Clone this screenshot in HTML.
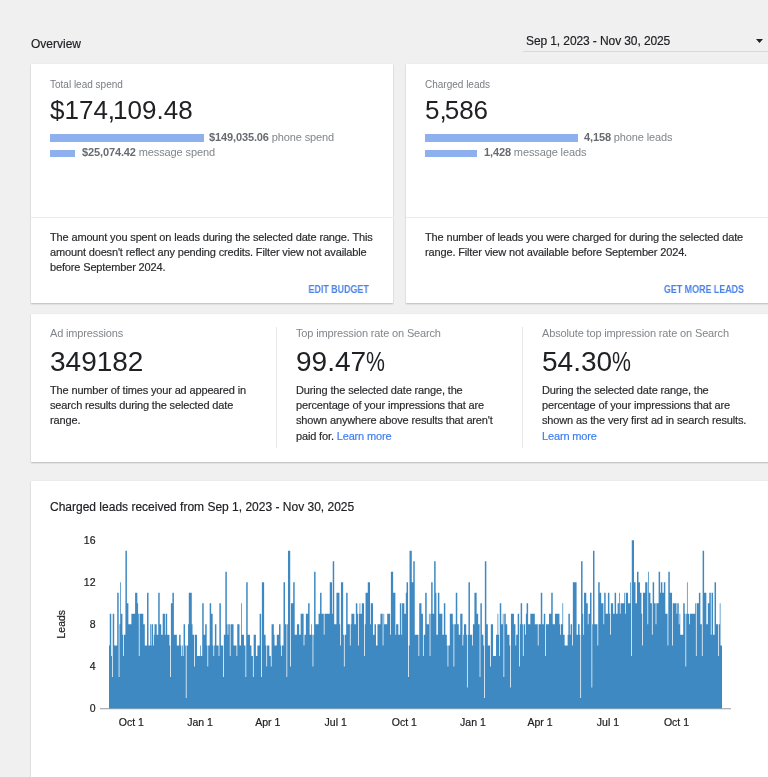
<!DOCTYPE html>
<html><head><meta charset="utf-8">
<style>
html,body{margin:0;padding:0;}
body{width:768px;height:777px;overflow:hidden;background:#f0f0f0;position:relative;font-family:"Liberation Sans",sans-serif;color:#202124;}
.a{position:absolute;white-space:nowrap;line-height:1;will-change:transform;-webkit-text-stroke:0.18px currentColor;}
.big,.btn,.lbl,.lbl2,.bt{-webkit-text-stroke:0 !important;}
.card{position:absolute;background:#fff;box-shadow:0 1px 1.5px rgba(0,0,0,.22),0 0 1px rgba(0,0,0,.08);}
.lbl{font-size:10px;color:#787c82;}
.lbl2{font-size:11px;color:#80868b;letter-spacing:-0.15px;}
.big{font-size:26px;color:#202124;}
.bar{position:absolute;background:#8fb0ef;}
.bt{font-size:11px;color:#80868b;letter-spacing:-0.12px;}
.bt b{color:#676b70;}
.desc{font-size:11px;color:#2a2b2e;line-height:15.2px;letter-spacing:-0.15px;}
.btn{font-size:10px;color:#4a82e6;font-weight:bold;transform:scaleX(0.89);transform-origin:100% 50%;}
.link{color:#3f7ef0;}
.cm{letter-spacing:-2px;}
.pct{display:inline-block;transform:scaleX(0.76);transform-origin:0 50%;}
.vdiv{position:absolute;width:1px;background:#e8e8e8;}
</style></head><body>

<div class="a" style="left:31px;top:37.6px;font-size:12px;color:#202124">Overview</div>
<div class="a" style="left:526px;top:34.6px;font-size:12px;color:#202124;letter-spacing:-0.1px">Sep 1, 2023 - Nov 30, 2025</div>
<div style="position:absolute;left:523px;top:51px;width:245px;height:1px;background:#d9d9d9"></div>
<svg style="position:absolute;left:755px;top:38px" width="9" height="6"><path d="M1 1 L8 1 L4.5 5 Z" fill="#202124"/></svg>

<!-- card 1 -->
<div class="card" style="left:31px;top:64px;width:362.2px;height:239.2px"></div>
<div class="a lbl" style="left:50px;top:79.7px">Total lead spend</div>
<div class="a big" style="left:50px;top:96.9px">$174<span class="cm">,</span>109.48</div>
<div class="bar" style="left:49.5px;top:134px;width:154px;height:7.5px"></div>
<div class="a bt" style="left:209px;top:131.6px"><b>$149,035.06</b> phone spend</div>
<div class="bar" style="left:49.5px;top:149.6px;width:25.7px;height:7.5px"></div>
<div class="a bt" style="left:82px;top:147.1px"><b>$25,074.42</b> message spend</div>
<div style="position:absolute;left:31px;top:217px;width:362.5px;height:1px;background:#ececec"></div>
<div class="a desc" style="left:50px;top:229.8px">The amount you spent on leads during the selected date range. This<br>amount doesn't reflect any pending credits. Filter view not available<br>before September 2024.</div>
<div class="a btn" style="right:399.25px;top:284.6px">EDIT BUDGET</div>

<!-- card 2 -->
<div class="card" style="left:406px;top:64px;width:362.5px;height:239.2px"></div>
<div class="a lbl" style="left:425px;top:79.7px">Charged leads</div>
<div class="a big" style="left:425px;top:96.9px">5<span class="cm">,</span>586</div>
<div class="bar" style="left:424.8px;top:134px;width:153px;height:7.5px"></div>
<div class="a bt" style="left:584px;top:131.6px"><b>4,158</b> phone leads</div>
<div class="bar" style="left:424.8px;top:149.6px;width:52.3px;height:7.5px"></div>
<div class="a bt" style="left:484px;top:147.1px"><b>1,428</b> message leads</div>
<div style="position:absolute;left:406px;top:217px;width:362.5px;height:1px;background:#ececec"></div>
<div class="a desc" style="left:425px;top:229.8px">The number of leads you were charged for during the selected date<br>range. Filter view not available before September 2024.</div>
<div class="a btn" style="right:24.2px;top:284.6px">GET MORE LEADS</div>

<!-- card 3 -->
<div class="card" style="left:31px;top:314px;width:737.5px;height:147.5px"></div>
<div class="vdiv" style="left:276px;top:326.5px;height:121px"></div>
<div class="vdiv" style="left:522px;top:326.5px;height:121px"></div>
<div class="a lbl2" style="left:50px;top:327.9px">Ad impressions</div>
<div class="a big" style="left:50px;top:347.8px;font-size:28px">349182</div>
<div class="a desc" style="left:50px;top:383.4px">The number of times your ad appeared in<br>search results during the selected date<br>range.</div>

<div class="a lbl2" style="left:296px;top:327.9px">Top impression rate on Search</div>
<div class="a big" style="left:296px;top:347.8px;font-size:28px">99.47<span class="pct">%</span></div>
<div class="a desc" style="left:296px;top:383.4px">During the selected date range, the<br>percentage of your impressions that are<br>shown anywhere above results that aren't<br>paid for. <span class="link">Learn more</span></div>

<div class="a lbl2" style="left:542px;top:327.9px">Absolute top impression rate on Search</div>
<div class="a big" style="left:542px;top:347.8px;font-size:28px">54.30<span class="pct">%</span></div>
<div class="a desc" style="left:542px;top:383.4px">During the selected date range, the<br>percentage of your impressions that are<br>shown as the very first ad in search results.<br><span class="link">Learn more</span></div>

<!-- card 4 chart -->
<div class="card" style="left:31px;top:481px;width:737.5px;height:320px"></div>
<div class="a" style="left:50px;top:500.6px;font-size:12px;color:#202124">Charged leads received from Sep 1, 2023 - Nov 30, 2025</div>
<svg id="chart" style="position:absolute;left:0;top:0" width="768" height="777">
<rect x="100" y="708" width="631" height="1.3" fill="#b0b0b0"/>
<path d="M109.00,708.5L109.00,645.38L109.75,645.38L109.75,613.82L110.49,613.82L110.49,613.82L111.24,613.82L111.24,655.90L111.98,655.90L111.98,676.94L112.73,676.94L112.73,613.82L113.47,613.82L113.47,613.82L114.22,613.82L114.22,645.38L114.97,645.38L114.97,645.38L115.71,645.38L115.71,645.38L116.46,645.38L116.46,645.38L117.20,645.38L117.20,592.78L117.95,592.78L117.95,592.78L118.69,592.78L118.69,676.94L119.44,676.94L119.44,624.34L120.19,624.34L120.19,582.26L120.93,582.26L120.93,613.82L121.68,613.82L121.68,613.82L122.42,613.82L122.42,634.86L123.17,634.86L123.17,655.90L123.91,655.90L123.91,634.86L124.66,634.86L124.66,634.86L125.41,634.86L125.41,550.70L126.15,550.70L126.15,550.70L126.90,550.70L126.90,603.30L127.64,603.30L127.64,603.30L128.39,603.30L128.39,624.34L129.14,624.34L129.14,624.34L129.88,624.34L129.88,624.34L130.63,624.34L130.63,624.34L131.37,624.34L131.37,613.82L132.12,613.82L132.12,613.82L132.86,613.82L132.86,613.82L133.61,613.82L133.61,613.82L134.36,613.82L134.36,613.82L135.10,613.82L135.10,592.78L135.85,592.78L135.85,592.78L136.59,592.78L136.59,592.78L137.34,592.78L137.34,603.30L138.08,603.30L138.08,613.82L138.83,613.82L138.83,655.90L139.58,655.90L139.58,613.82L140.32,613.82L140.32,613.82L141.07,613.82L141.07,613.82L141.81,613.82L141.81,613.82L142.56,613.82L142.56,613.82L143.30,613.82L143.30,624.34L144.05,624.34L144.05,624.34L144.80,624.34L144.80,645.38L145.54,645.38L145.54,645.38L146.29,645.38L146.29,645.38L147.03,645.38L147.03,592.78L147.78,592.78L147.78,592.78L148.52,592.78L148.52,645.38L149.27,645.38L149.27,645.38L150.02,645.38L150.02,624.34L150.76,624.34L150.76,645.38L151.51,645.38L151.51,624.34L152.25,624.34L152.25,624.34L153.00,624.34L153.00,645.38L153.74,645.38L153.74,634.86L154.49,634.86L154.49,624.34L155.24,624.34L155.24,624.34L155.98,624.34L155.98,624.34L156.73,624.34L156.73,634.86L157.47,634.86L157.47,634.86L158.22,634.86L158.22,592.78L158.96,592.78L158.96,592.78L159.71,592.78L159.71,624.34L160.46,624.34L160.46,624.34L161.20,624.34L161.20,634.86L161.95,634.86L161.95,634.86L162.69,634.86L162.69,613.82L163.44,613.82L163.44,613.82L164.18,613.82L164.18,613.82L164.93,613.82L164.93,634.86L165.68,634.86L165.68,613.82L166.42,613.82L166.42,613.82L167.17,613.82L167.17,634.86L167.91,634.86L167.91,634.86L168.66,634.86L168.66,634.86L169.41,634.86L169.41,645.38L170.15,645.38L170.15,676.94L170.90,676.94L170.90,603.30L171.64,603.30L171.64,603.30L172.39,603.30L172.39,592.78L173.13,592.78L173.13,592.78L173.88,592.78L173.88,634.86L174.63,634.86L174.63,634.86L175.37,634.86L175.37,634.86L176.12,634.86L176.12,634.86L176.86,634.86L176.86,645.38L177.61,645.38L177.61,645.38L178.35,645.38L178.35,645.38L179.10,645.38L179.10,634.86L179.85,634.86L179.85,634.86L180.59,634.86L180.59,645.38L181.34,645.38L181.34,655.90L182.08,655.90L182.08,645.38L182.83,645.38L182.83,655.90L183.57,655.90L183.57,624.34L184.32,624.34L184.32,624.34L185.07,624.34L185.07,645.38L185.81,645.38L185.81,697.98L186.56,697.98L186.56,645.38L187.30,645.38L187.30,645.38L188.05,645.38L188.05,624.34L188.79,624.34L188.79,592.78L189.54,592.78L189.54,592.78L190.29,592.78L190.29,592.78L191.03,592.78L191.03,592.78L191.78,592.78L191.78,624.34L192.52,624.34L192.52,634.86L193.27,634.86L193.27,634.86L194.01,634.86L194.01,666.42L194.76,666.42L194.76,634.86L195.51,634.86L195.51,634.86L196.25,634.86L196.25,634.86L197.00,634.86L197.00,655.90L197.74,655.90L197.74,655.90L198.49,655.90L198.49,655.90L199.23,655.90L199.23,655.90L199.98,655.90L199.98,645.38L200.73,645.38L200.73,655.90L201.47,655.90L201.47,655.90L202.22,655.90L202.22,603.30L202.96,603.30L202.96,603.30L203.71,603.30L203.71,634.86L204.45,634.86L204.45,634.86L205.20,634.86L205.20,624.34L205.95,624.34L205.95,624.34L206.69,624.34L206.69,645.38L207.44,645.38L207.44,666.42L208.18,666.42L208.18,645.38L208.93,645.38L208.93,645.38L209.68,645.38L209.68,603.30L210.42,603.30L210.42,603.30L211.17,603.30L211.17,613.82L211.91,613.82L211.91,613.82L212.66,613.82L212.66,645.38L213.40,645.38L213.40,655.90L214.15,655.90L214.15,645.38L214.90,645.38L214.90,624.34L215.64,624.34L215.64,624.34L216.39,624.34L216.39,645.38L217.13,645.38L217.13,645.38L217.88,645.38L217.88,645.38L218.62,645.38L218.62,655.90L219.37,655.90L219.37,603.30L220.12,603.30L220.12,603.30L220.86,603.30L220.86,645.38L221.61,645.38L221.61,645.38L222.35,645.38L222.35,645.38L223.10,645.38L223.10,676.94L223.84,676.94L223.84,634.86L224.59,634.86L224.59,634.86L225.34,634.86L225.34,571.74L226.08,571.74L226.08,571.74L226.83,571.74L226.83,624.34L227.57,624.34L227.57,634.86L228.32,634.86L228.32,624.34L229.06,624.34L229.06,624.34L229.81,624.34L229.81,655.90L230.56,655.90L230.56,624.34L231.30,624.34L231.30,624.34L232.05,624.34L232.05,624.34L232.79,624.34L232.79,624.34L233.54,624.34L233.54,645.38L234.28,645.38L234.28,645.38L235.03,645.38L235.03,645.38L235.78,645.38L235.78,645.38L236.52,645.38L236.52,655.90L237.27,655.90L237.27,624.34L238.01,624.34L238.01,624.34L238.76,624.34L238.76,624.34L239.50,624.34L239.50,645.38L240.25,645.38L240.25,645.38L241.00,645.38L241.00,603.30L241.74,603.30L241.74,634.86L242.49,634.86L242.49,634.86L243.23,634.86L243.23,634.86L243.98,634.86L243.98,645.38L244.73,645.38L244.73,645.38L245.47,645.38L245.47,676.94L246.22,676.94L246.22,582.26L246.96,582.26L246.96,582.26L247.71,582.26L247.71,634.86L248.45,634.86L248.45,634.86L249.20,634.86L249.20,634.86L249.95,634.86L249.95,645.38L250.69,645.38L250.69,645.38L251.44,645.38L251.44,655.90L252.18,655.90L252.18,655.90L252.93,655.90L252.93,676.94L253.67,676.94L253.67,634.86L254.42,634.86L254.42,634.86L255.17,634.86L255.17,634.86L255.91,634.86L255.91,655.90L256.66,655.90L256.66,655.90L257.40,655.90L257.40,645.38L258.15,645.38L258.15,645.38L258.89,645.38L258.89,645.38L259.64,645.38L259.64,613.82L260.39,613.82L260.39,613.82L261.13,613.82L261.13,676.94L261.88,676.94L261.88,582.26L262.62,582.26L262.62,582.26L263.37,582.26L263.37,582.26L264.11,582.26L264.11,634.86L264.86,634.86L264.86,634.86L265.61,634.86L265.61,645.38L266.35,645.38L266.35,666.42L267.10,666.42L267.10,645.38L267.84,645.38L267.84,645.38L268.59,645.38L268.59,645.38L269.33,645.38L269.33,655.90L270.08,655.90L270.08,655.90L270.83,655.90L270.83,666.42L271.57,666.42L271.57,624.34L272.32,624.34L272.32,624.34L273.06,624.34L273.06,624.34L273.81,624.34L273.81,634.86L274.55,634.86L274.55,645.38L275.30,645.38L275.30,645.38L276.05,645.38L276.05,645.38L276.79,645.38L276.79,634.86L277.54,634.86L277.54,634.86L278.28,634.86L278.28,634.86L279.03,634.86L279.03,624.34L279.77,624.34L279.77,624.34L280.52,624.34L280.52,645.38L281.27,645.38L281.27,655.90L282.01,655.90L282.01,645.38L282.76,645.38L282.76,645.38L283.50,645.38L283.50,582.26L284.25,582.26L284.25,582.26L285.00,582.26L285.00,624.34L285.74,624.34L285.74,624.34L286.49,624.34L286.49,676.94L287.23,676.94L287.23,624.34L287.98,624.34L287.98,550.70L288.72,550.70L288.72,550.70L289.47,550.70L289.47,550.70L290.22,550.70L290.22,666.42L290.96,666.42L290.96,603.30L291.71,603.30L291.71,603.30L292.45,603.30L292.45,603.30L293.20,603.30L293.20,582.26L293.94,582.26L293.94,582.26L294.69,582.26L294.69,634.86L295.44,634.86L295.44,634.86L296.18,634.86L296.18,634.86L296.93,634.86L296.93,624.34L297.67,624.34L297.67,624.34L298.42,624.34L298.42,624.34L299.16,624.34L299.16,634.86L299.91,634.86L299.91,634.86L300.66,634.86L300.66,613.82L301.40,613.82L301.40,613.82L302.15,613.82L302.15,613.82L302.89,613.82L302.89,613.82L303.64,613.82L303.64,645.38L304.38,645.38L304.38,634.86L305.13,634.86L305.13,634.86L305.88,634.86L305.88,613.82L306.62,613.82L306.62,613.82L307.37,613.82L307.37,613.82L308.11,613.82L308.11,603.30L308.86,603.30L308.86,603.30L309.60,603.30L309.60,634.86L310.35,634.86L310.35,634.86L311.10,634.86L311.10,624.34L311.84,624.34L311.84,634.86L312.59,634.86L312.59,666.42L313.33,666.42L313.33,634.86L314.08,634.86L314.08,571.74L314.82,571.74L314.82,571.74L315.57,571.74L315.57,624.34L316.32,624.34L316.32,624.34L317.06,624.34L317.06,624.34L317.81,624.34L317.81,624.34L318.55,624.34L318.55,613.82L319.30,613.82L319.30,613.82L320.05,613.82L320.05,592.78L320.79,592.78L320.79,592.78L321.54,592.78L321.54,613.82L322.28,613.82L322.28,613.82L323.03,613.82L323.03,613.82L323.77,613.82L323.77,634.86L324.52,634.86L324.52,613.82L325.27,613.82L325.27,613.82L326.01,613.82L326.01,613.82L326.76,613.82L326.76,613.82L327.50,613.82L327.50,613.82L328.25,613.82L328.25,613.82L328.99,613.82L328.99,613.82L329.74,613.82L329.74,582.26L330.49,582.26L330.49,582.26L331.23,582.26L331.23,582.26L331.98,582.26L331.98,613.82L332.72,613.82L332.72,561.22L333.47,561.22L333.47,561.22L334.21,561.22L334.21,624.34L334.96,624.34L334.96,624.34L335.71,624.34L335.71,624.34L336.45,624.34L336.45,592.78L337.20,592.78L337.20,592.78L337.94,592.78L337.94,592.78L338.69,592.78L338.69,592.78L339.43,592.78L339.43,624.34L340.18,624.34L340.18,645.38L340.93,645.38L340.93,582.26L341.67,582.26L341.67,582.26L342.42,582.26L342.42,582.26L343.16,582.26L343.16,634.86L343.91,634.86L343.91,666.42L344.65,666.42L344.65,634.86L345.40,634.86L345.40,634.86L346.15,634.86L346.15,592.78L346.89,592.78L346.89,592.78L347.64,592.78L347.64,624.34L348.38,624.34L348.38,624.34L349.13,624.34L349.13,624.34L349.87,624.34L349.87,645.38L350.62,645.38L350.62,624.34L351.37,624.34L351.37,613.82L352.11,613.82L352.11,613.82L352.86,613.82L352.86,613.82L353.60,613.82L353.60,613.82L354.35,613.82L354.35,624.34L355.09,624.34L355.09,624.34L355.84,624.34L355.84,603.30L356.59,603.30L356.59,603.30L357.33,603.30L357.33,613.82L358.08,613.82L358.08,645.38L358.82,645.38L358.82,613.82L359.57,613.82L359.57,603.30L360.32,603.30L360.32,613.82L361.06,613.82L361.06,613.82L361.81,613.82L361.81,603.30L362.55,603.30L362.55,603.30L363.30,603.30L363.30,603.30L364.04,603.30L364.04,655.90L364.79,655.90L364.79,624.34L365.54,624.34L365.54,592.78L366.28,592.78L366.28,592.78L367.03,592.78L367.03,592.78L367.77,592.78L367.77,582.26L368.52,582.26L368.52,582.26L369.26,582.26L369.26,582.26L370.01,582.26L370.01,624.34L370.76,624.34L370.76,603.30L371.50,603.30L371.50,603.30L372.25,603.30L372.25,603.30L372.99,603.30L372.99,634.86L373.74,634.86L373.74,634.86L374.48,634.86L374.48,624.34L375.23,624.34L375.23,624.34L375.98,624.34L375.98,645.38L376.72,645.38L376.72,645.38L377.47,645.38L377.47,624.34L378.21,624.34L378.21,624.34L378.96,624.34L378.96,624.34L379.70,624.34L379.70,624.34L380.45,624.34L380.45,613.82L381.20,613.82L381.20,613.82L381.94,613.82L381.94,613.82L382.69,613.82L382.69,645.38L383.43,645.38L383.43,613.82L384.18,613.82L384.18,624.34L384.92,624.34L384.92,624.34L385.67,624.34L385.67,624.34L386.42,624.34L386.42,624.34L387.16,624.34L387.16,613.82L387.91,613.82L387.91,613.82L388.65,613.82L388.65,613.82L389.40,613.82L389.40,613.82L390.14,613.82L390.14,634.86L390.89,634.86L390.89,571.74L391.64,571.74L391.64,571.74L392.38,571.74L392.38,571.74L393.13,571.74L393.13,592.78L393.87,592.78L393.87,592.78L394.62,592.78L394.62,592.78L395.36,592.78L395.36,634.86L396.11,634.86L396.11,624.34L396.86,624.34L396.86,624.34L397.60,624.34L397.60,624.34L398.35,624.34L398.35,634.86L399.09,634.86L399.09,634.86L399.84,634.86L399.84,603.30L400.59,603.30L400.59,603.30L401.33,603.30L401.33,634.86L402.08,634.86L402.08,603.30L402.82,603.30L402.82,603.30L403.57,603.30L403.57,603.30L404.31,603.30L404.31,613.82L405.06,613.82L405.06,613.82L405.81,613.82L405.81,592.78L406.55,592.78L406.55,582.26L407.30,582.26L407.30,582.26L408.04,582.26L408.04,676.94L408.79,676.94L408.79,645.38L409.53,645.38L409.53,550.70L410.28,550.70L410.28,550.70L411.03,550.70L411.03,550.70L411.77,550.70L411.77,582.26L412.52,582.26L412.52,582.26L413.26,582.26L413.26,561.22L414.01,561.22L414.01,561.22L414.75,561.22L414.75,634.86L415.50,634.86L415.50,634.86L416.25,634.86L416.25,634.86L416.99,634.86L416.99,634.86L417.74,634.86L417.74,634.86L418.48,634.86L418.48,655.90L419.23,655.90L419.23,603.30L419.97,603.30L419.97,603.30L420.72,603.30L420.72,603.30L421.47,603.30L421.47,613.82L422.21,613.82L422.21,613.82L422.96,613.82L422.96,655.90L423.70,655.90L423.70,634.86L424.45,634.86L424.45,634.86L425.19,634.86L425.19,592.78L425.94,592.78L425.94,592.78L426.69,592.78L426.69,624.34L427.43,624.34L427.43,624.34L428.18,624.34L428.18,624.34L428.92,624.34L428.92,613.82L429.67,613.82L429.67,655.90L430.41,655.90L430.41,613.82L431.16,613.82L431.16,582.26L431.91,582.26L431.91,582.26L432.65,582.26L432.65,613.82L433.40,613.82L433.40,613.82L434.14,613.82L434.14,561.22L434.89,561.22L434.89,561.22L435.64,561.22L435.64,592.78L436.38,592.78L436.38,634.86L437.13,634.86L437.13,634.86L437.87,634.86L437.87,592.78L438.62,592.78L438.62,592.78L439.36,592.78L439.36,613.82L440.11,613.82L440.11,613.82L440.86,613.82L440.86,613.82L441.60,613.82L441.60,613.82L442.35,613.82L442.35,634.86L443.09,634.86L443.09,634.86L443.84,634.86L443.84,603.30L444.58,603.30L444.58,603.30L445.33,603.30L445.33,634.86L446.08,634.86L446.08,634.86L446.82,634.86L446.82,645.38L447.57,645.38L447.57,666.42L448.31,666.42L448.31,645.38L449.06,645.38L449.06,645.38L449.80,645.38L449.80,613.82L450.55,613.82L450.55,613.82L451.30,613.82L451.30,613.82L452.04,613.82L452.04,613.82L452.79,613.82L452.79,624.34L453.53,624.34L453.53,666.42L454.28,666.42L454.28,624.34L455.02,624.34L455.02,624.34L455.77,624.34L455.77,592.78L456.52,592.78L456.52,592.78L457.26,592.78L457.26,624.34L458.01,624.34L458.01,624.34L458.75,624.34L458.75,634.86L459.50,634.86L459.50,634.86L460.24,634.86L460.24,613.82L460.99,613.82L460.99,613.82L461.74,613.82L461.74,613.82L462.48,613.82L462.48,645.38L463.23,645.38L463.23,634.86L463.97,634.86L463.97,624.34L464.72,624.34L464.72,624.34L465.46,624.34L465.46,624.34L466.21,624.34L466.21,634.86L466.96,634.86L466.96,687.46L467.70,687.46L467.70,634.86L468.45,634.86L468.45,582.26L469.19,582.26L469.19,582.26L469.94,582.26L469.94,634.86L470.68,634.86L470.68,634.86L471.43,634.86L471.43,634.86L472.18,634.86L472.18,645.38L472.92,645.38L472.92,624.34L473.67,624.34L473.67,624.34L474.41,624.34L474.41,592.78L475.16,592.78L475.16,592.78L475.91,592.78L475.91,592.78L476.65,592.78L476.65,613.82L477.40,613.82L477.40,613.82L478.14,613.82L478.14,624.34L478.89,624.34L478.89,624.34L479.63,624.34L479.63,676.94L480.38,676.94L480.38,603.30L481.13,603.30L481.13,603.30L481.87,603.30L481.87,634.86L482.62,634.86L482.62,634.86L483.36,634.86L483.36,645.38L484.11,645.38L484.11,697.98L484.85,697.98L484.85,561.22L485.60,561.22L485.60,561.22L486.35,561.22L486.35,624.34L487.09,624.34L487.09,624.34L487.84,624.34L487.84,645.38L488.58,645.38L488.58,645.38L489.33,645.38L489.33,645.38L490.07,645.38L490.07,666.42L490.82,666.42L490.82,624.34L491.57,624.34L491.57,624.34L492.31,624.34L492.31,624.34L493.06,624.34L493.06,655.90L493.80,655.90L493.80,655.90L494.55,655.90L494.55,655.90L495.29,655.90L495.29,655.90L496.04,655.90L496.04,634.86L496.79,634.86L496.79,634.86L497.53,634.86L497.53,613.82L498.28,613.82L498.28,634.86L499.02,634.86L499.02,655.90L499.77,655.90L499.77,603.30L500.51,603.30L500.51,603.30L501.26,603.30L501.26,624.34L502.01,624.34L502.01,624.34L502.75,624.34L502.75,613.82L503.50,613.82L503.50,676.94L504.24,676.94L504.24,613.82L504.99,613.82L504.99,613.82L505.73,613.82L505.73,624.34L506.48,624.34L506.48,624.34L507.23,624.34L507.23,634.86L507.97,634.86L507.97,634.86L508.72,634.86L508.72,634.86L509.46,634.86L509.46,645.38L510.21,645.38L510.21,687.46L510.95,687.46L510.95,613.82L511.70,613.82L511.70,613.82L512.45,613.82L512.45,613.82L513.19,613.82L513.19,613.82L513.94,613.82L513.94,624.34L514.68,624.34L514.68,624.34L515.43,624.34L515.43,645.38L516.18,645.38L516.18,634.86L516.92,634.86L516.92,634.86L517.67,634.86L517.67,613.82L518.41,613.82L518.41,613.82L519.16,613.82L519.16,666.42L519.90,666.42L519.90,624.34L520.65,624.34L520.65,603.30L521.40,603.30L521.40,603.30L522.14,603.30L522.14,624.34L522.89,624.34L522.89,655.90L523.63,655.90L523.63,624.34L524.38,624.34L524.38,624.34L525.12,624.34L525.12,634.86L525.87,634.86L525.87,613.82L526.62,613.82L526.62,603.30L527.36,603.30L527.36,603.30L528.11,603.30L528.11,624.34L528.85,624.34L528.85,624.34L529.60,624.34L529.60,624.34L530.34,624.34L530.34,613.82L531.09,613.82L531.09,613.82L531.84,613.82L531.84,613.82L532.58,613.82L532.58,613.82L533.33,613.82L533.33,613.82L534.07,613.82L534.07,613.82L534.82,613.82L534.82,624.34L535.56,624.34L535.56,624.34L536.31,624.34L536.31,624.34L537.06,624.34L537.06,624.34L537.80,624.34L537.80,645.38L538.55,645.38L538.55,624.34L539.29,624.34L539.29,624.34L540.04,624.34L540.04,624.34L540.78,624.34L540.78,592.78L541.53,592.78L541.53,592.78L542.28,592.78L542.28,624.34L543.02,624.34L543.02,624.34L543.77,624.34L543.77,613.82L544.51,613.82L544.51,613.82L545.26,613.82L545.26,655.90L546.00,655.90L546.00,624.34L546.75,624.34L546.75,624.34L547.50,624.34L547.50,624.34L548.24,624.34L548.24,624.34L548.99,624.34L548.99,613.82L549.73,613.82L549.73,613.82L550.48,613.82L550.48,613.82L551.23,613.82L551.23,592.78L551.97,592.78L551.97,592.78L552.72,592.78L552.72,624.34L553.46,624.34L553.46,624.34L554.21,624.34L554.21,624.34L554.95,624.34L554.95,613.82L555.70,613.82L555.70,613.82L556.45,613.82L556.45,613.82L557.19,613.82L557.19,613.82L557.94,613.82L557.94,613.82L558.68,613.82L558.68,613.82L559.43,613.82L559.43,624.34L560.17,624.34L560.17,634.86L560.92,634.86L560.92,624.34L561.67,624.34L561.67,624.34L562.41,624.34L562.41,603.30L563.16,603.30L563.16,634.86L563.90,634.86L563.90,634.86L564.65,634.86L564.65,645.38L565.39,645.38L565.39,645.38L566.14,645.38L566.14,645.38L566.89,645.38L566.89,645.38L567.63,645.38L567.63,634.86L568.38,634.86L568.38,613.82L569.12,613.82L569.12,613.82L569.87,613.82L569.87,634.86L570.61,634.86L570.61,624.34L571.36,624.34L571.36,624.34L572.11,624.34L572.11,645.38L572.85,645.38L572.85,582.26L573.60,582.26L573.60,582.26L574.34,582.26L574.34,582.26L575.09,582.26L575.09,582.26L575.83,582.26L575.83,582.26L576.58,582.26L576.58,634.86L577.33,634.86L577.33,634.86L578.07,634.86L578.07,624.34L578.82,624.34L578.82,624.34L579.56,624.34L579.56,634.86L580.31,634.86L580.31,697.98L581.05,697.98L581.05,561.22L581.80,561.22L581.80,561.22L582.55,561.22L582.55,613.82L583.29,613.82L583.29,634.86L584.04,634.86L584.04,592.78L584.78,592.78L584.78,592.78L585.53,592.78L585.53,592.78L586.27,592.78L586.27,603.30L587.02,603.30L587.02,603.30L587.77,603.30L587.77,624.34L588.51,624.34L588.51,613.82L589.26,613.82L589.26,613.82L590.00,613.82L590.00,592.78L590.75,592.78L590.75,592.78L591.50,592.78L591.50,687.46L592.24,687.46L592.24,624.34L592.99,624.34L592.99,550.70L593.73,550.70L593.73,550.70L594.48,550.70L594.48,624.34L595.22,624.34L595.22,624.34L595.97,624.34L595.97,624.34L596.72,624.34L596.72,624.34L597.46,624.34L597.46,645.38L598.21,645.38L598.21,582.26L598.95,582.26L598.95,582.26L599.70,582.26L599.70,592.78L600.44,592.78L600.44,592.78L601.19,592.78L601.19,603.30L601.94,603.30L601.94,603.30L602.68,603.30L602.68,603.30L603.43,603.30L603.43,624.34L604.17,624.34L604.17,592.78L604.92,592.78L604.92,592.78L605.66,592.78L605.66,613.82L606.41,613.82L606.41,613.82L607.16,613.82L607.16,613.82L607.90,613.82L607.90,592.78L608.65,592.78L608.65,592.78L609.39,592.78L609.39,613.82L610.14,613.82L610.14,634.86L610.88,634.86L610.88,603.30L611.63,603.30L611.63,603.30L612.38,603.30L612.38,603.30L613.12,603.30L613.12,613.82L613.87,613.82L613.87,613.82L614.61,613.82L614.61,592.78L615.36,592.78L615.36,592.78L616.10,592.78L616.10,613.82L616.85,613.82L616.85,613.82L617.60,613.82L617.60,603.30L618.34,603.30L618.34,603.30L619.09,603.30L619.09,592.78L619.83,592.78L619.83,613.82L620.58,613.82L620.58,603.30L621.32,603.30L621.32,603.30L622.07,603.30L622.07,603.30L622.82,603.30L622.82,603.30L623.56,603.30L623.56,603.30L624.31,603.30L624.31,592.78L625.05,592.78L625.05,613.82L625.80,613.82L625.80,592.78L626.55,592.78L626.55,592.78L627.29,592.78L627.29,592.78L628.04,592.78L628.04,603.30L628.78,603.30L628.78,603.30L629.53,603.30L629.53,603.30L630.27,603.30L630.27,582.26L631.02,582.26L631.02,655.90L631.77,655.90L631.77,540.18L632.51,540.18L632.51,540.18L633.26,540.18L633.26,540.18L634.00,540.18L634.00,582.26L634.75,582.26L634.75,582.26L635.49,582.26L635.49,603.30L636.24,603.30L636.24,603.30L636.99,603.30L636.99,571.74L637.73,571.74L637.73,571.74L638.48,571.74L638.48,582.26L639.22,582.26L639.22,582.26L639.97,582.26L639.97,592.78L640.71,592.78L640.71,592.78L641.46,592.78L641.46,613.82L642.21,613.82L642.21,645.38L642.95,645.38L642.95,592.78L643.70,592.78L643.70,592.78L644.44,592.78L644.44,592.78L645.19,592.78L645.19,582.26L645.93,582.26L645.93,582.26L646.68,582.26L646.68,582.26L647.43,582.26L647.43,624.34L648.17,624.34L648.17,571.74L648.92,571.74L648.92,592.78L649.66,592.78L649.66,592.78L650.41,592.78L650.41,603.30L651.15,603.30L651.15,603.30L651.90,603.30L651.90,634.86L652.65,634.86L652.65,582.26L653.39,582.26L653.39,582.26L654.14,582.26L654.14,603.30L654.88,603.30L654.88,603.30L655.63,603.30L655.63,624.34L656.37,624.34L656.37,603.30L657.12,603.30L657.12,603.30L657.87,603.30L657.87,603.30L658.61,603.30L658.61,571.74L659.36,571.74L659.36,571.74L660.10,571.74L660.10,592.78L660.85,592.78L660.85,582.26L661.59,582.26L661.59,582.26L662.34,582.26L662.34,592.78L663.09,592.78L663.09,592.78L663.83,592.78L663.83,582.26L664.58,582.26L664.58,582.26L665.32,582.26L665.32,613.82L666.07,613.82L666.07,613.82L666.82,613.82L666.82,613.82L667.56,613.82L667.56,645.38L668.31,645.38L668.31,571.74L669.05,571.74L669.05,571.74L669.80,571.74L669.80,592.78L670.54,592.78L670.54,592.78L671.29,592.78L671.29,592.78L672.04,592.78L672.04,645.38L672.78,645.38L672.78,603.30L673.53,603.30L673.53,603.30L674.27,603.30L674.27,603.30L675.02,603.30L675.02,603.30L675.76,603.30L675.76,603.30L676.51,603.30L676.51,613.82L677.26,613.82L677.26,603.30L678.00,603.30L678.00,603.30L678.75,603.30L678.75,624.34L679.49,624.34L679.49,613.82L680.24,613.82L680.24,634.86L680.98,634.86L680.98,634.86L681.73,634.86L681.73,634.86L682.48,634.86L682.48,634.86L683.22,634.86L683.22,603.30L683.97,603.30L683.97,603.30L684.71,603.30L684.71,613.82L685.46,613.82L685.46,666.42L686.20,666.42L686.20,613.82L686.95,613.82L686.95,582.26L687.70,582.26L687.70,613.82L688.44,613.82L688.44,613.82L689.19,613.82L689.19,624.34L689.93,624.34L689.93,613.82L690.68,613.82L690.68,613.82L691.42,613.82L691.42,613.82L692.17,613.82L692.17,613.82L692.92,613.82L692.92,613.82L693.66,613.82L693.66,613.82L694.41,613.82L694.41,613.82L695.15,613.82L695.15,603.30L695.90,603.30L695.90,655.90L696.64,655.90L696.64,603.30L697.39,603.30L697.39,603.30L698.14,603.30L698.14,603.30L698.88,603.30L698.88,592.78L699.63,592.78L699.63,592.78L700.37,592.78L700.37,624.34L701.12,624.34L701.12,624.34L701.86,624.34L701.86,655.90L702.61,655.90L702.61,550.70L703.36,550.70L703.36,550.70L704.10,550.70L704.10,592.78L704.85,592.78L704.85,592.78L705.59,592.78L705.59,592.78L706.34,592.78L706.34,624.34L707.09,624.34L707.09,624.34L707.83,624.34L707.83,603.30L708.58,603.30L708.58,603.30L709.32,603.30L709.32,592.78L710.07,592.78L710.07,592.78L710.81,592.78L710.81,634.86L711.56,634.86L711.56,592.78L712.31,592.78L712.31,592.78L713.05,592.78L713.05,634.86L713.80,634.86L713.80,634.86L714.54,634.86L714.54,582.26L715.29,582.26L715.29,582.26L716.03,582.26L716.03,624.34L716.78,624.34L716.78,624.34L717.53,624.34L717.53,624.34L718.27,624.34L718.27,655.90L719.02,655.90L719.02,624.34L719.76,624.34L719.76,603.30L720.51,603.30L720.51,645.38L721.25,645.38L721.25,645.38L722.00,645.38L722.00,708.5Z" fill="#3e89c2"/>
<text x="95.5" y="712.1" text-anchor="end" font-size="10.5" fill="#202124" stroke="#202124" stroke-width="0.2">0</text>
<text x="95.5" y="670.0" text-anchor="end" font-size="10.5" fill="#202124" stroke="#202124" stroke-width="0.2">4</text>
<text x="95.5" y="627.9" text-anchor="end" font-size="10.5" fill="#202124" stroke="#202124" stroke-width="0.2">8</text>
<text x="95.5" y="585.9" text-anchor="end" font-size="10.5" fill="#202124" stroke="#202124" stroke-width="0.2">12</text>
<text x="95.5" y="543.8" text-anchor="end" font-size="10.5" fill="#202124" stroke="#202124" stroke-width="0.2">16</text>
<text transform="translate(65.0,624.2) rotate(-90)" text-anchor="middle" font-size="10.5" fill="#202124" stroke="#202124" stroke-width="0.2">Leads</text>
<text x="131.4" y="725.7" text-anchor="middle" font-size="10.5" fill="#202124" stroke="#202124" stroke-width="0.2">Oct 1</text>
<text x="200.0" y="725.7" text-anchor="middle" font-size="10.5" fill="#202124" stroke="#202124" stroke-width="0.2">Jan 1</text>
<text x="267.8" y="725.7" text-anchor="middle" font-size="10.5" fill="#202124" stroke="#202124" stroke-width="0.2">Apr 1</text>
<text x="335.7" y="725.7" text-anchor="middle" font-size="10.5" fill="#202124" stroke="#202124" stroke-width="0.2">Jul 1</text>
<text x="404.3" y="725.7" text-anchor="middle" font-size="10.5" fill="#202124" stroke="#202124" stroke-width="0.2">Oct 1</text>
<text x="472.9" y="725.7" text-anchor="middle" font-size="10.5" fill="#202124" stroke="#202124" stroke-width="0.2">Jan 1</text>
<text x="540.0" y="725.7" text-anchor="middle" font-size="10.5" fill="#202124" stroke="#202124" stroke-width="0.2">Apr 1</text>
<text x="607.9" y="725.7" text-anchor="middle" font-size="10.5" fill="#202124" stroke="#202124" stroke-width="0.2">Jul 1</text>
<text x="676.5" y="725.7" text-anchor="middle" font-size="10.5" fill="#202124" stroke="#202124" stroke-width="0.2">Oct 1</text>
</svg>

</body></html>
